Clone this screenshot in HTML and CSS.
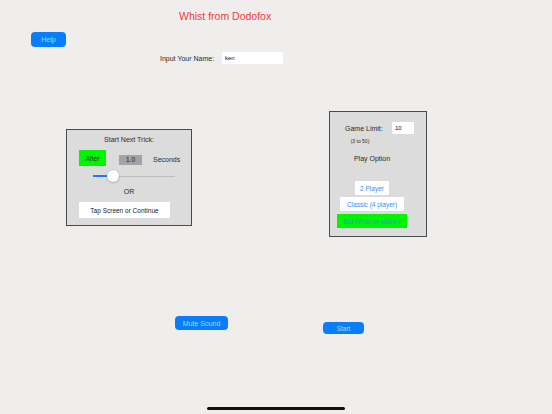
FILE: index.html
```html
<!DOCTYPE html>
<html>
<head>
<meta charset="utf-8">
<link rel="stylesheet" href="styles.css">
</head>
<body>
<div class="screen">
  <div class="title">Whist from Dodofox</div>
  <div class="help-row"><div class="btn help">Help</div></div>
  <div class="name-row">
    <span class="name-label">Input Your Name:</span>
    <div class="field name-field">ken</div>
  </div>
  <div class="panels">
    <div class="panel trick">
      <div class="trick-title">Start Next Trick:</div>
      <div class="after-row">
        <div class="after">After</div>
        <div class="secs-box">1.0</div>
        <div class="secs-label">Seconds</div>
      </div>
      <div class="slider">
        <div class="track"><div class="fill"></div></div>
        <div class="thumb"></div>
      </div>
      <div class="or">OR</div>
      <div class="tap">Tap Screen or Continue</div>
    </div>
    <div class="panel options">
      <div class="limit-row">
        <span class="limit-label">Game Limit:</span>
        <div class="field limit-field">10</div>
      </div>
      <div class="range">(3 to 50)</div>
      <div class="play-option">Play Option</div>
      <div class="opt opt-2">2 Player</div>
      <div class="opt opt-classic">Classic (4 player)</div>
      <div class="opt opt-bid">Bid Whist (4 player)</div>
    </div>
  </div>
  <div class="bottom-row">
    <div class="btn mute">Mute Sound</div>
    <div class="btn start">Start</div>
  </div>
  <div class="home"></div>
</div>
</body>
</html>
```
FILE: styles.css
```css
* { box-sizing: border-box; }
html, body { margin: 0; padding: 0; }
body {
  background: #efeeec;
  font-family: "Liberation Sans", Arial, Helvetica, sans-serif;
  color: #2a2a2a;
}
.screen {
  width: 552px;
  height: 414px;
  display: flex;
  flex-direction: column;
  overflow: hidden;
}
.title {
  margin-top: 9px;
  margin-left: 179px;
  height: 15px;
  line-height: 15px;
  font-size: 10.5px;
  color: #f2393a;
}
.help-row { margin-top: 8px; margin-left: 31px; display: flex; }
.btn {
  background: #0a7dfd;
  border-radius: 4px;
  color: #8be6b8;
  font-size: 7px;
  display: flex;
  align-items: center;
  justify-content: center;
}
.help { width: 35px; height: 15px; }
.name-row {
  margin-top: 5px;
  margin-left: 160px;
  display: flex;
  align-items: center;
  height: 12px;
}
.name-label { font-size: 7px; width: 62px; }
.field {
  background: #fff;
  font-size: 6px;
  color: #111;
  display: flex;
  align-items: center;
  padding-left: 3px;
}
.name-field { width: 61px; height: 12px; }
.panels {
  margin-top: 47px;
  display: flex;
  align-items: flex-start;
}
.panel {
  background: #dcdcdc;
  border: 1px solid #4a4a4a;
  display: flex;
  flex-direction: column;
}
.trick {
  margin-left: 66px;
  margin-top: 18px;
  width: 126px;
  height: 97px;
  padding-left: 12px;
}
.trick-title {
  font-size: 7px;
  height: 10px;
  line-height: 10px;
  margin-top: 5px;
  margin-left: -12px;
  text-align: center;
}
.after-row {
  margin-top: 5px;
  display: flex;
  align-items: center;
  height: 16px;
}
.after {
  width: 27px;
  height: 16px;
  background: #00f500;
  font-size: 6.5px;
  display: flex;
  align-items: center;
  justify-content: center;
  color: #333;
}
.secs-box {
  margin-left: 13px;
  margin-top: 3px;
  width: 23px;
  height: 10px;
  background: #a3a3a3;
  font-size: 6.5px;
  display: flex;
  align-items: center;
  justify-content: center;
  color: #222;
}
.secs-label {
  margin-left: 11px;
  margin-top: 2px;
  font-size: 7px;
}
.slider {
  position: relative;
  margin-top: 3px;
  margin-left: 14px;
  width: 82px;
  height: 14px;
  display: flex;
  align-items: center;
}
.track {
  width: 82px;
  height: 1px;
  background: #bdbdbd;
  display: flex;
  align-items: center;
}
.fill { width: 20px; height: 2px; background: #1e7cf0; }
.thumb {
  position: absolute;
  left: 14px;
  top: 1px;
  width: 12px;
  height: 12px;
  border-radius: 50%;
  background: #fff;
  box-shadow: 0 0.5px 2px rgba(0,0,0,0.35);
}
.or {
  margin-top: 4px;
  margin-left: -12px;
  text-align: center;
  font-size: 7px;
  height: 10px;
  line-height: 10px;
}
.tap {
  margin-top: 5px;
  width: 91px;
  height: 16px;
  background: #fff;
  font-size: 6.5px;
  display: flex;
  align-items: center;
  justify-content: center;
  color: #222;
}
.options {
  margin-left: 137px;
  width: 98px;
  height: 126px;
  align-items: center;
  padding-right: 12px;
}
.limit-row {
  margin-top: 10px;
  display: flex;
  align-items: center;
  height: 12px;
  margin-left: 15px;
}
.limit-label { font-size: 7px; width: 47px; }
.limit-field { width: 22px; height: 12px; font-size: 6px; }
.range {
  margin-top: 3px;
  font-size: 5px;
  height: 8px;
  line-height: 8px;
  margin-left: -24px;
}
.play-option {
  margin-top: 9px;
  font-size: 7px;
  height: 10px;
  line-height: 10px;
}
.opt {
  background: #fff;
  height: 14px;
  font-size: 6.5px;
  color: #3b8ef0;
  display: flex;
  align-items: center;
  justify-content: center;
}
.opt-2 { margin-top: 17px; width: 34px; }
.opt-classic { margin-top: 2px; width: 64px; }
.opt-bid { margin-top: 3px; width: 70px; background: #00f500; color: #2f9fc4; }
.bottom-row {
  margin-top: 79px;
  display: flex;
  align-items: flex-start;
  height: 18px;
}
.mute { margin-left: 175px; width: 53px; height: 14px; }
.start { margin-left: 95px; margin-top: 6px; width: 41px; height: 12px; font-size: 6.5px; }
.home {
  margin-top: 73px;
  margin-left: 207px;
  width: 138px;
  height: 2.5px;
  border-radius: 2px;
  background: #111;
}
```
